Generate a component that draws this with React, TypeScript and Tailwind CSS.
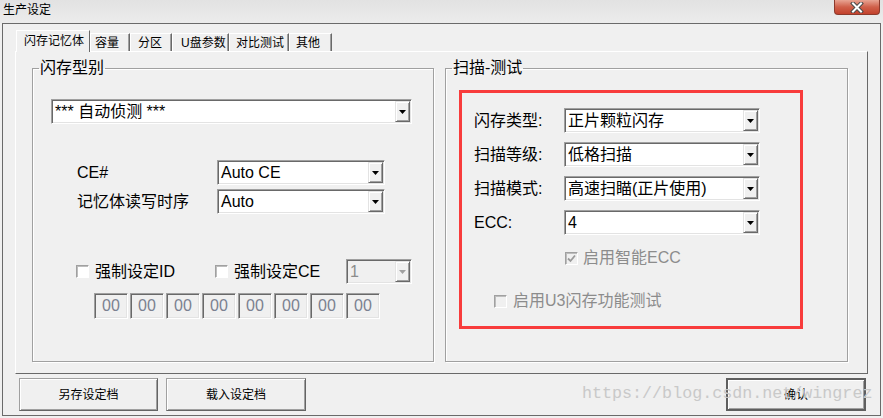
import React from "react";

const FONT = "font-['Liberation_Sans','Noto_Sans_CJK_SC',sans-serif]";

function Arrow({ disabled }: { disabled?: boolean }) {
  return (
    <div className="flex h-full w-[15px] shrink-0 items-center justify-center border border-t-[#e3e3e3] border-l-[#e3e3e3] border-b-[#696969] border-r-[#696969] bg-[#f0f0f0] shadow-[inset_1px_1px_0_#ffffff,inset_-1px_-1px_0_#a0a0a0]">
      <svg width="7" height="4" viewBox="0 0 7 4">
        <polygon points="0,0 7,0 3.5,4" fill={disabled ? "#a0a0a0" : "#000"} />
      </svg>
    </div>
  );
}

function Combo({
  className,
  text,
  disabled,
}: {
  className: string;
  text: string;
  disabled?: boolean;
}) {
  return (
    <div
      className={`flex h-[25px] shrink-0 border border-t-[#a0a0a0] border-l-[#a0a0a0] border-b-white border-r-white p-[1px] shadow-[inset_1px_1px_0_#696969,inset_-1px_-1px_0_#e3e3e3] ${
        disabled ? "bg-[#f0f0f0]" : "bg-white"
      } ${className}`}
    >
      <div
        className={`flex-1 overflow-hidden whitespace-nowrap pl-[2px] text-[16px] leading-[21px] ${
          disabled ? "text-[#8c8c8c]" : "text-black"
        }`}
      >
        {text}
      </div>
      <Arrow disabled={disabled} />
    </div>
  );
}

function CheckBox({ checked, disabled }: { checked?: boolean; disabled?: boolean }) {
  return (
    <div
      className={`flex h-[13px] w-[13px] shrink-0 items-center justify-center border border-t-[#a0a0a0] border-l-[#a0a0a0] border-b-white border-r-white shadow-[inset_1px_1px_0_#bdbdbd] ${
        disabled ? "bg-[#f0f0f0]" : "bg-white"
      }`}
    >
      {checked && (
        <svg width="9" height="9" viewBox="0 0 9 9">
          <path d="M1 4.5 L3.5 7 L8 1.5" stroke="#9a9a9a" strokeWidth="1.8" fill="none" />
        </svg>
      )}
    </div>
  );
}

function Button({ label, def, className }: { label: string; def?: boolean; className: string }) {
  return (
    <div
      className={`flex h-[33px] items-center justify-center text-[12px] text-black ${
        def
          ? "border-2 border-[#5f5f5f] shadow-[inset_1px_1px_0_#ffffff,inset_-1px_-1px_0_#a0a0a0]"
          : "border border-t-[#a0a0a0] border-l-[#a0a0a0] border-b-[#646464] border-r-[#646464] shadow-[inset_1px_1px_0_#ffffff,inset_-1px_-1px_0_#a0a0a0]"
      } bg-[#f0f0f0] ${className}`}
    >
      {label}
    </div>
  );
}

const tabs = [
  { label: "闪存记忆体", w: "w-[74px]", pl: "pl-[7px]", sel: true },
  { label: "容量", w: "w-[40px]", pl: "pl-[4px]" },
  { label: "分区", w: "w-[42px]", pl: "pl-[7px]" },
  { label: "U盘参数", w: "w-[57px]", pl: "pl-[8px]" },
  { label: "对比测试", w: "w-[60px]", pl: "pl-[6px]" },
  { label: "其他", w: "w-[43px]", pl: "pl-[6px]" },
];

export default function App() {
  return (
    <div className={`relative h-[418px] w-[883px] overflow-hidden bg-[#f0f0f0] ${FONT}`}>
      {/* title bar */}
      <div className="flex h-[23px] items-start justify-between bg-[linear-gradient(to_bottom,#e2e2e2,#ececec)]">
        <div className="pl-[3px] pt-[2px] text-[12px] leading-[16px] text-black">生产设定</div>
        <div className="mr-[3px] flex h-[15px] w-[46px] items-center justify-center rounded-b-[4px] border border-t-0 border-[#8c3a2c] bg-[linear-gradient(to_bottom,#e8a493,#d0604a_50%,#c2412c)]">
          <svg width="14" height="11" viewBox="0 0 14 11">
            <path d="M3 1.5 L11 9.5 M11 1.5 L3 9.5" stroke="#4a4a4a" strokeWidth="4" strokeLinecap="square" />
            <path d="M3 1.5 L11 9.5 M11 1.5 L3 9.5" stroke="#ffffff" strokeWidth="2" strokeLinecap="square" />
          </svg>
        </div>
      </div>

      {/* window frame */}
      <div className="ml-[2px] flex h-[393px] w-[879px] flex-col border border-[#6a6a6a]">
        {/* tab strip */}
        <div className="ml-[13px] flex h-[27px] items-end">
          {tabs.map((t) =>
            t.sel ? (
              <div
                key={t.label}
                className={`relative z-10 -mb-[1px] h-[22px] ${t.w} ${t.pl} border-l border-t border-r border-l-white border-t-white border-r-[#696969] bg-[#f0f0f0] pt-[2px] text-[12px] leading-[16px] text-black`}
              >
                {t.label}
              </div>
            ) : (
              <div
                key={t.label}
                className={`h-[18px] ${t.w} ${t.pl} border-l border-t border-r border-l-white border-t-white border-r-[#696969] pt-[2px] text-[12px] leading-[15px] text-black shadow-[inset_-1px_0_0_#a0a0a0]`}
              >
                {t.label}
              </div>
            )
          )}
        </div>

        {/* tab panel */}
        <div className="ml-[12px] flex h-[323px] w-[853px] border border-t-white border-l-white border-b-[#696969] border-r-[#696969] pl-[16px] pt-[6px]">
          <div className="flex gap-[11px]">
            {/* left group */}
            <fieldset className="h-[304px] w-[402px] border border-[#a0a0a0] shadow-[inset_1px_1px_0_#ffffff,1px_1px_0_#ffffff]">
              <legend className="ml-[6px] px-[1px] text-[16px] leading-[20px] text-black">闪存型别</legend>
              <div className="flex flex-col">
                <Combo className="ml-[18px] mt-[21px] w-[361px]" text="*** 自动侦测 ***" />
                <div className="ml-[44px] mt-[36px] flex items-center">
                  <div className="w-[140px] text-[16px] leading-[20px] text-black">CE#</div>
                  <Combo className="w-[168px]" text="Auto CE" />
                </div>
                <div className="ml-[44px] mt-[4px] flex items-center">
                  <div className="w-[140px] text-[16px] leading-[20px] text-black">记忆体读写时序</div>
                  <Combo className="w-[168px]" text="Auto" />
                </div>
                <div className="ml-[43px] mt-[45px] flex h-[25px] items-center">
                  <div className="flex w-[139px] items-center gap-[6px]">
                    <CheckBox />
                    <span className="text-[16px] leading-[20px] text-black">强制设定ID</span>
                  </div>
                  <div className="flex w-[131px] items-center gap-[6px]">
                    <CheckBox />
                    <span className="text-[16px] leading-[20px] text-black">强制设定CE</span>
                  </div>
                  <Combo className="w-[66px]" text="1" disabled />
                </div>
                <div className="ml-[61px] mt-[9px] flex gap-[2px]">
                  {Array.from({ length: 8 }).map((_, i) => (
                    <div
                      key={i}
                      className="flex h-[26px] w-[34px] items-center justify-center border border-t-[#a0a0a0] border-l-[#a0a0a0] border-b-white border-r-white bg-[#f0f0f0] text-[16px] leading-[20px] text-[#7b8190] shadow-[inset_1px_1px_0_#696969,inset_-1px_-1px_0_#e3e3e3]"
                    >
                      00
                    </div>
                  ))}
                </div>
              </div>
            </fieldset>

            {/* right group */}
            <fieldset className="h-[304px] w-[403px] border border-[#a0a0a0] shadow-[inset_1px_1px_0_#ffffff,1px_1px_0_#ffffff]">
              <legend className="ml-[6px] px-[1px] text-[16px] leading-[20px] text-black">扫描-测试</legend>
              <div className="ml-[13px] mt-[12px] flex h-[239px] w-[344px] flex-col border-[3px] border-[#f83c3c]">
                <div className="mt-[15px] flex flex-col gap-[9px] pl-[12px]">
                  {[
                    ["闪存类型:", "正片颗粒闪存"],
                    ["扫描等级:", "低格扫描"],
                    ["扫描模式:", "高速扫瞄(正片使用)"],
                    ["ECC:", "4"],
                  ].map(([l, v]) => (
                    <div key={l} className="flex items-center">
                      <div className="w-[90px] text-[16px] leading-[20px] text-black">{l}</div>
                      <Combo className="w-[196px]" text={v} />
                    </div>
                  ))}
                </div>
                <div className="ml-[103px] mt-[15px] flex h-[16px] items-center gap-[5px]">
                  <CheckBox checked disabled />
                  <span className="text-[16px] leading-[20px] text-[#8c8c8c]">启用智能ECC</span>
                </div>
                <div className="ml-[32px] mt-[27px] flex h-[16px] items-center gap-[6px]">
                  <CheckBox disabled />
                  <span className="text-[16px] leading-[20px] text-[#8c8c8c]">启用U3闪存功能测试</span>
                </div>
              </div>
            </fieldset>
          </div>
        </div>

        {/* bottom buttons */}
        <div className="mt-[4px] flex items-center">
          <Button className="ml-[16px] w-[139px]" label="另存设定档" />
          <Button className="ml-[8px] w-[140px]" label="载入设定档" />
          <Button className="ml-auto mr-[14px] w-[140px]" label="确认" def />
        </div>
      </div>

      {/* watermark */}
      <div className="pointer-events-none absolute left-[582px] top-[383px] font-['Liberation_Mono',monospace] text-[16.7px] leading-[22px] text-[#c9c9c9]">
        https://blog.csdn.net/wingrez
      </div>
    </div>
  );
}
